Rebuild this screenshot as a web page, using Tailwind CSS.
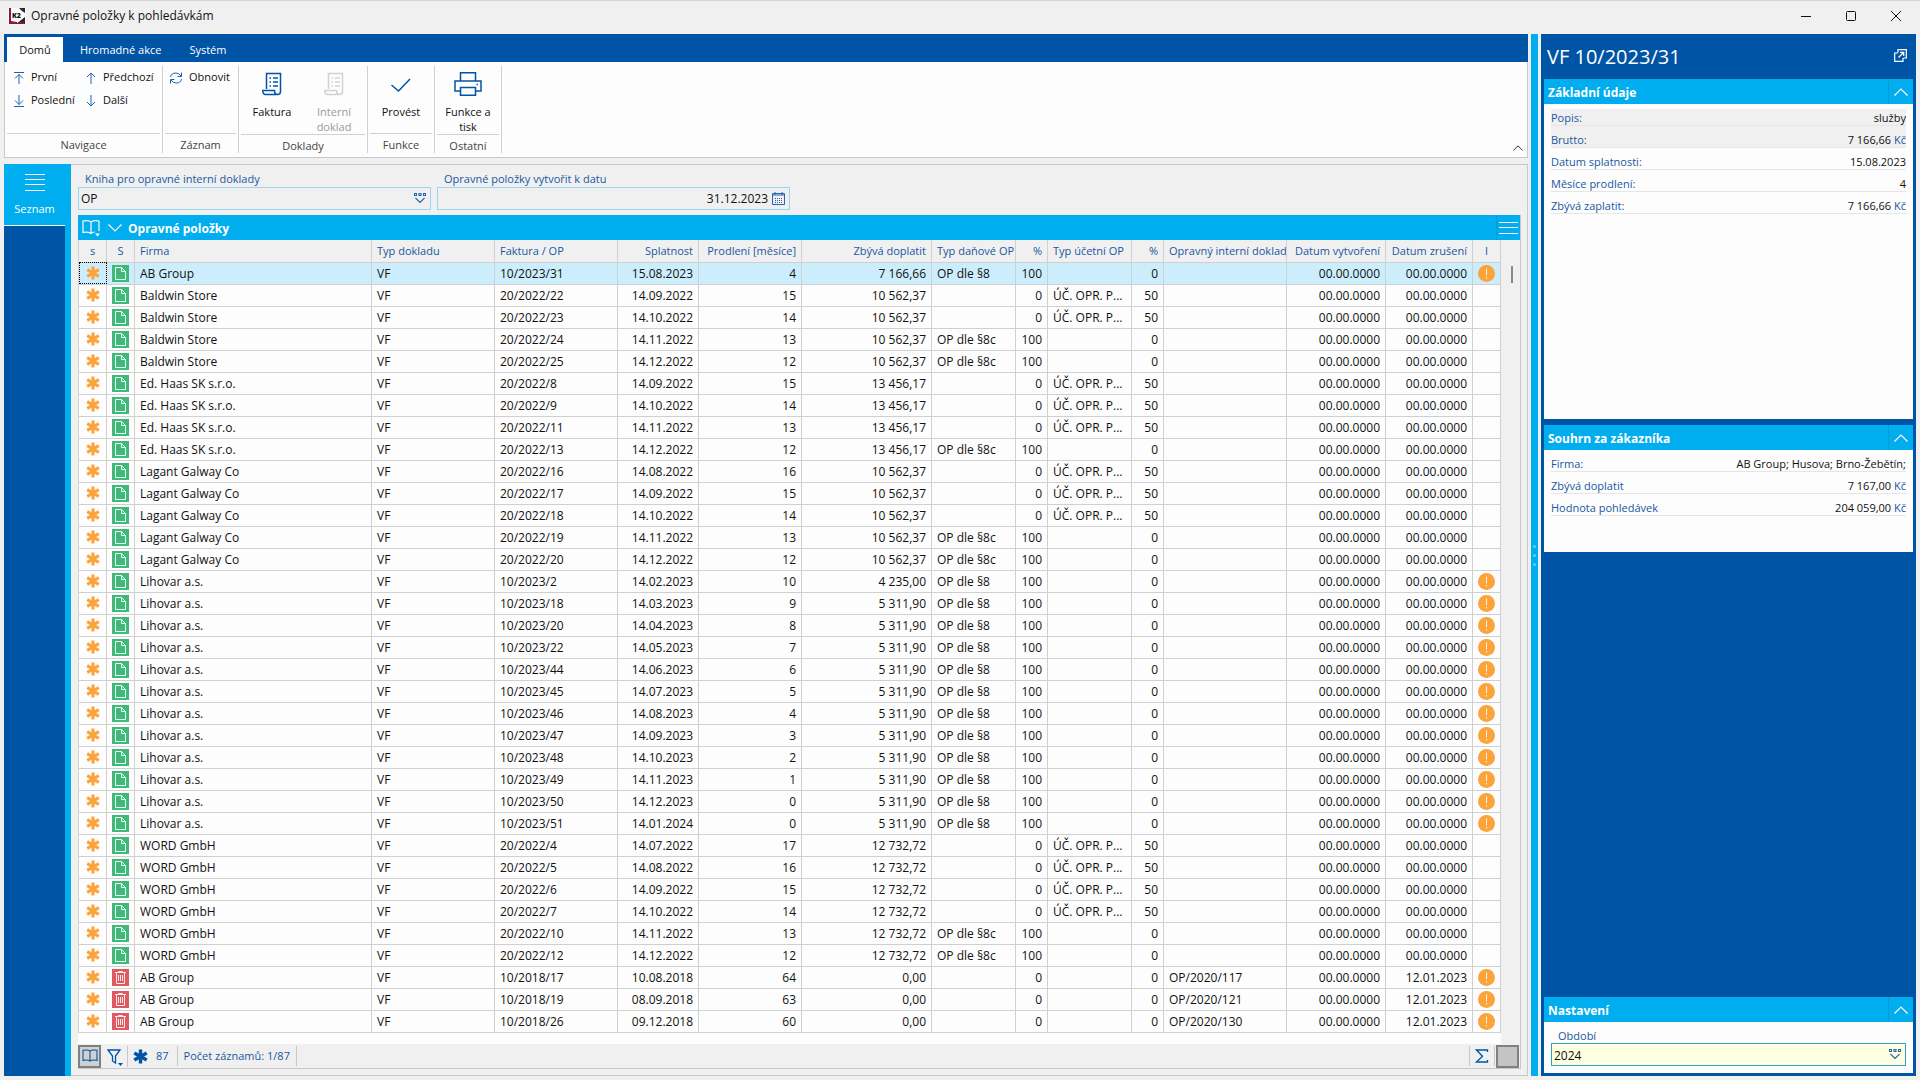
<!DOCTYPE html>
<html lang="cs">
<head>
  <meta charset="UTF-8">
  <meta name="viewport" content="width=device-width, initial-scale=1.0">
  <title>Opravné položky k pohledávkám</title>
  <script src="https://cdn.jsdelivr.net/npm/@tailwindcss/browser@4"></script>
</head>
<body class="flex flex-col h-screen overflow-hidden bg-[#f0f0f0] border-t border-[#d5d5d5] font-['Open_Sans','Noto_Sans',sans-serif] text-[11px] text-[#111111]">

  <!-- Icons -->
  <svg class="hidden">
    <symbol id="i-star" viewBox="0 0 14 14"><path d="M7 0.5V13.5M1.2 3.7L12.8 10.3M12.8 3.7L1.2 10.3" stroke="currentColor" stroke-width="3.2" fill="none"/></symbol>
    <symbol id="i-doc" viewBox="0 0 17 17"><rect width="17" height="17" fill="#3fb87a"/><path d="M3.5 2.5h6l4 4v8h-10zM9.5 2.5v4h4" stroke="#e8fff2" fill="none"/></symbol>
    <symbol id="i-bin" viewBox="0 0 17 17"><rect width="17" height="17" fill="#dc5a60"/><path d="M3 3.5h11M6.5 3.5v-1h4v1M4.5 3.5v11h8v-11M6.5 6v6M8.5 6v6M10.5 6v6" stroke="#ffeaea" fill="none"/></symbol>
    <symbol id="i-warn" viewBox="0 0 17 17"><circle cx="8.5" cy="8.5" r="8.5" fill="#fba43c"/><path d="M8.5 3.5v7M8.5 12v1.5" stroke="#fff3dd" fill="none"/></symbol>
    <symbol id="i-pick" viewBox="0 0 12 12"><path d="M0.5 0.5h2v2h-2zM5 0.5h2v2h-2zM9.5 0.5h2v2h-2zM1.5 5l4.5 4.5l4.5-4.5" stroke="#2566ae" stroke-width="1.1" fill="none"/></symbol>
    <symbol id="i-up" viewBox="0 0 14 8"><path d="M0.5 7.5L7 1l6.5 6.5" stroke="currentColor" stroke-width="1.2" fill="none"/></symbol>
    <symbol id="i-book" viewBox="0 0 18 16"><path d="M9 14V2.5C7.5 1 3.5 1 1 1.5V13C3.5 12.5 7.5 12.5 9 14C10.5 12.5 14.5 12.5 17 13V1.5C14.5 1 10.5 1 9 2.5" stroke="currentColor" stroke-width="1.2" fill="none"/></symbol>
    <symbol id="i-invoice" viewBox="0 0 20 24"><path d="M4.5 17V1.5H18.5V19.5Q18.5 22.5 15.5 22.5H3.5Q0.8 22.5 0.8 18.5H12.5Q12.5 22.5 15.5 22.5M7.5 6h1.5M11 6h5M7.5 10h1.5M11 10h5M7.5 14h1.5M11 14h5" stroke="currentColor" stroke-width="1.5" fill="none"/></symbol>
  </svg>

  <header class="flex items-center h-[33px] shrink-0 pl-2 pr-[17px] pb-1">
    <svg class="w-[18px] h-4" viewBox="0 0 18 16"><rect width="18" height="16" fill="#fbfbfb"/><path d="M1 0h2v13l6 1v2H1z" fill="#8c1838"/><path d="M11 0h6v5l-3-2z" fill="#2b2b2b"/><path d="M17 9v7H8z" fill="#3a2028"/><path d="M11 14l5 0v2h-7z" fill="#8c1838"/><text x="4" y="10" font-size="7" font-weight="900" fill="#111111">K2</text></svg>
    <h1 class="ml-[5px] flex-1 text-xs">Opravné položky k pohledávkám</h1>
    <div class="flex items-center gap-[31px]">
      <button aria-label="Minimalizovat" class="w-3.5 h-3.5"><svg viewBox="0 0 14 14"><path d="M2 7.5h10" stroke="#111111"/></svg></button>
      <button aria-label="Maximalizovat" class="w-3.5 h-3.5"><svg viewBox="0 0 14 14"><rect x="2.5" y="2.5" width="9" height="9" rx="1" stroke="#111111" fill="none"/></svg></button>
      <button aria-label="Zavřít" class="w-3.5 h-3.5"><svg viewBox="0 0 14 14"><path d="M2 2l10 10M12 2L2 12" stroke="#111111"/></svg></button>
    </div>
  </header>

  <div class="flex flex-1 min-h-0 pl-1 pr-1 pb-1">
    <div class="flex flex-col flex-1 min-w-0">
      <nav class="flex h-7 shrink-0 bg-[#0054a6] pt-[3px] pl-[3px] text-white">
        <a href="#" class="flex items-center justify-center h-full w-14 pt-px bg-white text-[#111111]">Domů</a>
        <a href="#" class="flex items-center h-full pt-px pl-[17px] pr-3">Hromadné akce</a>
        <a href="#" class="flex items-center h-full pt-px px-4">Systém</a>
      </nav>

      <section class="relative flex h-24 shrink-0 bg-[#fdfdfd] border-x border-b border-[#c8c8c8] text-center">
        <div class="flex flex-col w-[158px] my-1 px-0.5 border-r border-[#d0d0d0]">
          <div class="flex-1 flex text-left">
            <div class="flex flex-col w-[74px] pl-1.5">
              <button class="flex items-center gap-1.5 h-[23px]"><svg class="w-3 h-3 text-[#1d64b0]" viewBox="0 0 12 12"><path d="M1 0.5h10M6 12V2.5M2 6.5l4-4l4 4" stroke="currentColor" fill="none"/></svg>První</button>
              <button class="flex items-center gap-1.5 h-[23px]"><svg class="w-3 h-3 text-[#1d64b0]" viewBox="0 0 12 12"><path d="M1 11.5h10M6 0v9.5M2 5.5l4 4l4-4" stroke="currentColor" fill="none"/></svg>Poslední</button>
            </div>
            <div class="flex flex-col pl-1">
              <button class="flex items-center gap-1.5 h-[23px]"><svg class="w-3 h-3 text-[#1d64b0]" viewBox="0 0 12 12"><path d="M6 12V1M2 5l4-4l4 4" stroke="currentColor" fill="none"/></svg>Předchozí</button>
              <button class="flex items-center gap-1.5 h-[23px]"><svg class="w-3 h-3 text-[#1d64b0]" viewBox="0 0 12 12"><path d="M6 0v11M2 7l4 4l4-4" stroke="currentColor" fill="none"/></svg>Další</button>
            </div>
          </div>
          <div class="h-5 border-t border-[#d0d0d0] text-[#444444] leading-[21px]">Navigace</div>
        </div>
        <div class="flex flex-col w-[76px] my-1 px-0.5 border-r border-[#d0d0d0]">
          <div class="flex-1">
            <button class="flex items-center gap-1.5 h-[23px] pl-1"><svg class="w-3.5 h-3.5 text-[#1d64b0]" viewBox="-1 -1 14 14"><path d="M0.5 5Q1 1 6 1Q9 1 11 4M11.5 0.5v4h-4M11.5 7Q11 11 6 11Q3 11 1 8M0.5 11.5v-4h4" stroke="currentColor" fill="none"/></svg>Obnovit</button>
          </div>
          <div class="h-5 border-t border-[#d0d0d0] text-[#444444] leading-[21px]">Záznam</div>
        </div>
        <div class="flex flex-col w-[129px] my-1 px-0.5 border-r border-[#d0d0d0]">
          <div class="flex-1 flex">
            <button class="flex flex-col items-center w-1/2 pt-1.5 leading-[15px]"><svg class="w-5 h-6 mb-2 text-[#0054a6]"><use href="#i-invoice"/></svg>Faktura</button>
            <button disabled class="flex flex-col items-center w-1/2 pt-1.5 leading-[15px] text-[#9a9a9a]"><svg class="w-5 h-6 mb-2 text-[#d2d2d2]"><use href="#i-invoice"/></svg>Interní<br>doklad</button>
          </div>
          <div class="h-5 border-t border-[#d0d0d0] text-[#444444] leading-[21px]">Doklady</div>
        </div>
        <div class="flex flex-col w-[67px] my-1 px-0.5 border-r border-[#d0d0d0]">
          <button class="flex-1 flex flex-col items-center pt-1.5 leading-[15px]"><svg class="w-5 h-6 mb-2 text-[#0054a6]" viewBox="0 0 20 24"><path d="M0.5 13l7 6L19 7" stroke="currentColor" stroke-width="1.5" fill="none"/></svg>Provést</button>
          <div class="h-5 border-t border-[#d0d0d0] text-[#444444] leading-[21px]">Funkce</div>
        </div>
        <div class="flex flex-col w-[67px] my-1 px-0.5 border-r border-[#d0d0d0]">
          <button class="flex-1 flex flex-col items-center pt-1.5 leading-[15px]"><svg class="w-7 h-6 mb-2 text-[#0054a6]" viewBox="0 0 28 24"><path d="M6.5 9V0.8h15V9M6.5 19H1V9h26v10h-5.5M6.5 15.5h15v7.7h-15zM22.5 12.5h1.5" stroke="currentColor" stroke-width="1.5" fill="none"/></svg>Funkce a<br>tisk</button>
          <div class="h-5 border-t border-[#d0d0d0] text-[#444444] leading-[21px]">Ostatní</div>
        </div>
        <button aria-label="Sbalit pás karet" class="absolute right-1 bottom-1 w-2.5 h-2.5"><svg class="w-2.5 h-1.5"><use href="#i-up"/></svg></button>
      </section>

      <div class="flex flex-1 min-h-0 mt-1.5">
        <aside class="flex flex-col w-[67px] shrink-0 bg-[#00adee]">
          <button class="flex flex-col items-center h-[61px] pr-1.5 pt-2.5 text-white">
            <svg class="w-5 h-[17px] mb-2.5" viewBox="0 0 20 17"><path d="M0 0.5h20M0 5.5h20M0 10.5h20M0 16.5h20" stroke="#ffffff"/></svg>
            Seznam
          </button>
          <div class="flex-1 mr-1.5 border-t border-white bg-[#0054a6]"></div>
        </aside>

        <main class="flex flex-col flex-1 min-w-0 border-t border-r border-b border-[#c8c8c8] pl-[7px] pr-1.5 pb-1.5">
          <div class="flex gap-1.5 pt-1.5">
            <div class="w-[353px] text-[#1a57a0]">
              <label for="kniha" class="block pl-[7px] leading-4">Kniha pro opravné interní doklady</label>
              <div class="flex items-center h-[23px] border border-[#9ad5f0]">
                <input id="kniha" value="OP" class="flex-1 min-w-0 px-0.5 text-xs text-[#111111] outline-none">
                <svg class="w-3 h-3 mr-1"><use href="#i-pick"/></svg>
              </div>
            </div>
            <div class="w-[353px] text-[#1a57a0]">
              <label for="datum" class="block pl-[7px] leading-4">Opravné položky vytvořit k datu</label>
              <div class="flex items-center h-[23px] border border-[#9ad5f0]">
                <input id="datum" value="31.12.2023" class="flex-1 min-w-0 px-1 text-xs text-right text-[#111111] outline-none">
                <svg class="w-[13px] h-[13px] mr-1" viewBox="0 0 13 13"><path d="M0.5 1.5h12v11h-12zM0.5 3h12M3 0v3M10 0v3" stroke="#2566ae" fill="none"/><path d="M3 6.5h7M3 8.5h7M3 10.5h7" stroke="#2566ae" stroke-dasharray="1 1"/></svg>
              </div>
            </div>
          </div>

          <section class="flex flex-col flex-1 min-h-0 mt-[5px] border-r border-b border-[#c8c8c8]">
            <div class="flex items-center h-[25px] shrink-0 bg-[#00adee] pl-1 text-white">
              <svg class="w-[18px] h-[18px]" viewBox="0 0 18 18"><path d="M9 14.5V3C7.5 1.5 3.5 1.5 1 2V13.5C3.5 13 7.5 13 9 14.5C10.5 13 12 13 13 13M17 12V2C14.5 1.5 10.5 1.5 9 3" stroke="currentColor" stroke-width="1.2" fill="none"/><path d="M13 14.5h5l-2.5 3z" fill="currentColor"/></svg>
              <svg class="w-3.5 h-2 ml-2 rotate-180"><use href="#i-up"/></svg>
              <h2 class="flex-1 ml-1.5 pt-0.5 text-xs font-bold">Opravné položky</h2>
              <button aria-label="Nabídka" class="h-full px-0.5 border-l border-[#0a9ad6]"><svg class="w-[19px] h-3" viewBox="0 0 19 12"><path d="M0 0.5h19M0 5.5h19M0 11.5h19" stroke="#ffffff"/></svg></button>
            </div>
            <div class="flex flex-1 min-h-0">
              <div class="flex-1 min-w-0 bg-[#fdfdfd]">
                <table class="w-full table-fixed border-collapse">
                  <colgroup>
                    <col class="w-7"><col class="w-7"><col><col class="w-[123px]"><col class="w-[123px]"><col class="w-[81px]"><col class="w-[103px]"><col class="w-[130px]"><col class="w-[84px]"><col class="w-8"><col class="w-[84px]"><col class="w-8"><col class="w-[123px]"><col class="w-[99px]"><col class="w-[87px]"><col class="w-7">
                  </colgroup>
                  <thead id="head"></thead>
                  <tbody id="rows"></tbody>
                </table>
              </div>
              <div class="w-[17px] ml-0.5 pt-[26px] flex justify-center"><div class="w-0.5 h-[17px] bg-[#8a8a8a]"></div></div>
            </div>
            <footer class="flex items-center h-6 shrink-0 text-[#1a57a0]">
              <button aria-label="Kniha" class="flex items-center justify-center w-[23px] h-[23px] border-2 border-[#808080] bg-[#d0d0d0] text-[#0054a6]"><svg class="w-4 h-3.5"><use href="#i-book"/></svg></button>
              <button aria-label="Filtr" class="ml-1.5 pr-1 border-r border-[#c8c8c8] text-[#0054a6]"><svg class="w-4 h-[21px]" viewBox="0 0 16 21"><path d="M1 4h12L8.500 10v7l-3-2v-5z" stroke="currentColor" stroke-width="1.3" fill="none"/><path d="M11 17h5l-2.5 3z" fill="currentColor"/></svg></button>
              <svg class="w-[15px] h-[15px] ml-[5px] text-[#0054a6]"><use href="#i-star"/></svg>
              <span class="px-2 leading-5 border-r border-[#c8c8c8]">87</span>
              <span class="px-1.5 leading-5 border-r border-[#c8c8c8]">Počet záznamů: 1/87</span>
              <button aria-label="Součet" class="ml-auto px-[5px] border-x border-[#c8c8c8]"><svg class="w-3.5 h-5" viewBox="0 0 14 20"><path d="M12.5 6V4H1.5L7.5 10.2L1.5 16H12.5V14" stroke="#0054a6" stroke-width="1.3" fill="none"/></svg></button>
              <button aria-label="Panel" class="w-[23px] h-[23px] mx-px border-2 border-[#808080] bg-[#c4c4c4]"></button>
            </footer>
          </section>
        </main>
      </div>
    </div>

    <div class="flex flex-col items-center justify-center gap-1.5 w-[7px] mx-[3px] bg-[#00adee]">
      <i class="w-[3px] h-[3px] rounded-full bg-[#5cd0f8]"></i><i class="w-[3px] h-[3px] rounded-full bg-[#5cd0f8]"></i><i class="w-[3px] h-[3px] rounded-full bg-[#5cd0f8]"></i>
    </div>

    <aside class="flex flex-col w-[375px] shrink-0 bg-[#0054a6] px-[3px] pb-[3px]">
      <div class="flex items-center h-[45px] shrink-0 pl-[3px] pr-1.5 text-white">
        <h2 class="flex-1 text-xl">VF 10/2023/31</h2>
        <button aria-label="Otevřít" class="pb-[3px]"><svg class="w-[13px] h-[13px]" viewBox="0 0 13 13"><path d="M4 3.5V0.7h8.3V9H9.5M4 4H0.7v8.3H9V9M4.5 8.5l5-5M6 3.3h3.7V7" stroke="currentColor" stroke-width="1.2" fill="none"/></svg></button>
      </div>
      <section class="shrink-0 h-[340px] mb-1.5 bg-[#fdfdfd]">
        <div class="flex items-center h-[25px] bg-[#00adee] pl-1 text-white"><h3 class="flex-1 pt-0.5 text-xs font-bold">Základní údaje</h3><button aria-label="Sbalit" class="flex items-center h-full px-[5px] border-l border-[#0a9ad6]"><svg class="w-3.5 h-2"><use href="#i-up"/></svg></button></div>
        <dl id="zakladni" class="px-[7px]"></dl>
      </section>
      <section class="shrink-0 h-[127px] bg-[#fdfdfd]">
        <div class="flex items-center h-[25px] bg-[#00adee] pl-1 text-white"><h3 class="flex-1 pt-0.5 text-xs font-bold">Souhrn za zákazníka</h3><button aria-label="Sbalit" class="flex items-center h-full px-[5px] border-l border-[#0a9ad6]"><svg class="w-3.5 h-2"><use href="#i-up"/></svg></button></div>
        <dl id="souhrn" class="px-[7px]"></dl>
      </section>
      <section class="mt-auto shrink-0 bg-[#fdfdfd] pb-[7px]">
        <div class="flex items-center h-[25px] bg-[#00adee] pl-1 text-white"><h3 class="flex-1 pt-0.5 text-xs font-bold">Nastavení</h3><button aria-label="Sbalit" class="flex items-center h-full px-[5px] border-l border-[#0a9ad6]"><svg class="w-3.5 h-2"><use href="#i-up"/></svg></button></div>
        <div class="px-[7px] pt-1.5">
          <label for="obdobi" class="block pl-[7px] leading-[15px] text-[#1a57a0]">Období</label>
          <div class="flex items-center h-[23px] border border-[#2f9fc4] bg-[#ffffe1]">
            <input id="obdobi" value="2024" class="flex-1 min-w-0 px-0.5 pt-0.5 text-xs outline-none">
            <svg class="w-3 h-3 mr-1"><use href="#i-pick"/></svg>
          </div>
        </div>
      </section>
    </aside>
  </div>

  <script>
    const headers = ['s', 'S', 'Firma', 'Typ dokladu', 'Faktura / OP', 'Splatnost', 'Prodlení [měsíce]', 'Zbývá doplatit', 'Typ daňové OP', '%', 'Typ účetní OP', '%', 'Opravný interní doklad', 'Datum vytvoření', 'Datum zrušení', 'I'];
    const align = ['text-center', 'text-center', 'text-left', 'text-left', 'text-left', 'text-right', 'text-right', 'text-right', 'text-left', 'text-right', 'text-left', 'text-right', 'text-left', 'text-right', 'text-right', 'text-center'];

    // firma | faktura | splatnost | prodlení | zbývá | typ (8, 8c, u = účetní, - = zrušeno) | doklad
    const data = `AB Group|10/2023/31|15.08.2023|4|7 166,66|8
Baldwin Store|20/2022/22|14.09.2022|15|10 562,37|u
Baldwin Store|20/2022/23|14.10.2022|14|10 562,37|u
Baldwin Store|20/2022/24|14.11.2022|13|10 562,37|8c
Baldwin Store|20/2022/25|14.12.2022|12|10 562,37|8c
Ed. Haas SK s.r.o.|20/2022/8|14.09.2022|15|13 456,17|u
Ed. Haas SK s.r.o.|20/2022/9|14.10.2022|14|13 456,17|u
Ed. Haas SK s.r.o.|20/2022/11|14.11.2022|13|13 456,17|u
Ed. Haas SK s.r.o.|20/2022/13|14.12.2022|12|13 456,17|8c
Lagant Galway Co|20/2022/16|14.08.2022|16|10 562,37|u
Lagant Galway Co|20/2022/17|14.09.2022|15|10 562,37|u
Lagant Galway Co|20/2022/18|14.10.2022|14|10 562,37|u
Lagant Galway Co|20/2022/19|14.11.2022|13|10 562,37|8c
Lagant Galway Co|20/2022/20|14.12.2022|12|10 562,37|8c
Lihovar a.s.|10/2023/2|14.02.2023|10|4 235,00|8
Lihovar a.s.|10/2023/18|14.03.2023|9|5 311,90|8
Lihovar a.s.|10/2023/20|14.04.2023|8|5 311,90|8
Lihovar a.s.|10/2023/22|14.05.2023|7|5 311,90|8
Lihovar a.s.|10/2023/44|14.06.2023|6|5 311,90|8
Lihovar a.s.|10/2023/45|14.07.2023|5|5 311,90|8
Lihovar a.s.|10/2023/46|14.08.2023|4|5 311,90|8
Lihovar a.s.|10/2023/47|14.09.2023|3|5 311,90|8
Lihovar a.s.|10/2023/48|14.10.2023|2|5 311,90|8
Lihovar a.s.|10/2023/49|14.11.2023|1|5 311,90|8
Lihovar a.s.|10/2023/50|14.12.2023|0|5 311,90|8
Lihovar a.s.|10/2023/51|14.01.2024|0|5 311,90|8
WORD GmbH|20/2022/4|14.07.2022|17|12 732,72|u
WORD GmbH|20/2022/5|14.08.2022|16|12 732,72|u
WORD GmbH|20/2022/6|14.09.2022|15|12 732,72|u
WORD GmbH|20/2022/7|14.10.2022|14|12 732,72|u
WORD GmbH|20/2022/10|14.11.2022|13|12 732,72|8c
WORD GmbH|20/2022/12|14.12.2022|12|12 732,72|8c
AB Group|10/2018/17|10.08.2018|64|0,00|-|OP/2020/117
AB Group|10/2018/19|08.09.2018|63|0,00|-|OP/2020/121
AB Group|10/2018/26|09.12.2018|60|0,00|-|OP/2020/130`;

    const icon = (name, cls) => `<svg class="${cls}"><use href="#${name}"/></svg>`;

    document.getElementById('head').innerHTML = '<tr class="h-[22px] bg-[#f0f0f0] text-[#1a57a0]">' + headers.map((h, i) =>
      `<th class="${i === 8 || i === 12 ? 'pl-[5px] pr-0' : 'px-[5px]'} py-0 border border-[#d0d0d0] border-t-0 font-normal leading-5 whitespace-nowrap overflow-hidden ${align[i]}">${h}</th>`).join('') + '</tr>';

    document.getElementById('rows').innerHTML = data.split('\n').map((line, r) => {
      const [firma, faktura, splatnost, prodleni, zbyva, typ, doklad] = line.split('|');
      const danova = typ[0] === '8';
      const cells = [
        icon('i-star', 'w-3.5 h-3.5 mx-auto text-[#fba43c]'),
        icon(doklad ? 'i-bin' : 'i-doc', 'w-[17px] h-[17px] mx-auto'),
        firma, 'VF', faktura, splatnost, prodleni, zbyva,
        danova ? 'OP dle §' + typ : '', danova ? '100' : '0',
        typ === 'u' ? 'ÚČ. OPR. P...' : '', typ === 'u' ? '50' : '0',
        doklad || '', '00.00.0000', doklad ? '12.01.2023' : '00.00.0000',
        doklad || typ === '8' ? icon('i-warn', 'w-[17px] h-[17px] mx-auto') : ''
      ];
      return `<tr class="h-[22px] ${r === 0 ? 'bg-[#cceefc]' : ''}">` + cells.map((c, i) => {
        const pad = i < 2 || i === 15 ? 'p-0' : 'px-[5px] pt-px pb-0';
        const focus = r === 0 && i === 0 ? 'outline-1 -outline-offset-1 outline-dotted outline-black' : '';
        return `<td class="${pad} ${focus} border border-[#d0d0d0] text-xs leading-5 whitespace-nowrap overflow-hidden ${align[i]}">${c}</td>`;
      }).join('') + '</tr>';
    }).join('');

    function fill(id, items) {
      document.getElementById(id).innerHTML = items.map(([label, value, unit, shade]) =>
        `<div class="flex justify-between items-end h-[22px] border-b border-[#e6e6e6] leading-[15px] ${shade || ''}"><dt class="text-[#1a57a0]">${label}</dt><dd>${value}${unit ? ` <span class="text-[#1a57a0]">${unit}</span>` : ''}</dd></div>`).join('');
    }
    fill('zakladni', [
      ['Popis:', 'služby', '', 'bg-linear-to-b from-[#fdfdfd] from-25% to-[#f0f0f0] to-25%'],
      ['Brutto:', '7 166,66', 'Kč', 'bg-[#f0f0f0]'],
      ['Datum splatnosti:', '15.08.2023'],
      ['Měsíce prodlení:', '4'],
      ['Zbývá zaplatit:', '7 166,66', 'Kč']
    ]);
    fill('souhrn', [
      ['Firma:', 'AB Group; Husova; Brno-Žebětín;'],
      ['Zbývá doplatit', '7 167,00', 'Kč'],
      ['Hodnota pohledávek', '204 059,00', 'Kč']
    ]);
  </script>
</body>
</html>
